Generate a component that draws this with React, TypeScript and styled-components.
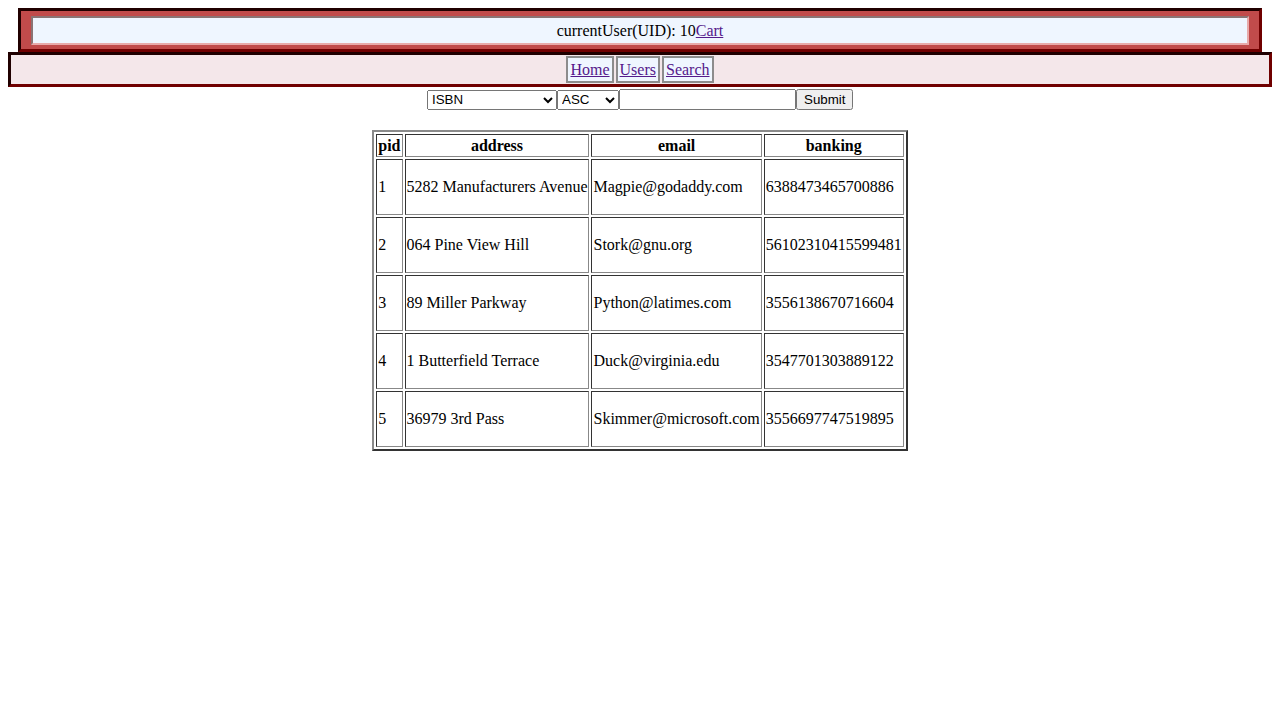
import React from "react";
import styled, { createGlobalStyle } from "styled-components";

const GlobalStyle = createGlobalStyle`
  body {
    margin: 8px;
    font-family: "Liberation Serif", "Times New Roman", serif;
    font-size: 16px;
    color: #000;
    background: #fff;
  }
  a { color: #551a8b; }
`;

const Header = styled.div`
  margin: 0 10px;
  border: 3px solid;
  border-color: #200000 #700000 #700000 #200000;
  background: #c14b4b;
  padding: 5px 10px 4px;
`;

const UserBox = styled.div`
  border: 2px solid;
  border-color: #8a7474 #e8aaaa #e8aaaa #8a7474;
  background: #eff6ff;
  text-align: center;
  padding: 4px 0 3px;
  line-height: 18px;
`;

const Nav = styled.div`
  border: 3px solid;
  border-color: #200000 #700000 #700000 #200000;
  background: #f4e7ea;
  padding: 1px 0;
  display: flex;
  justify-content: center;
  gap: 2px;
`;

const NavItem = styled.a`
  display: block;
  border: 2px solid #8c8c8c;
  background: #eff6ff;
  padding: 3px 2px 2px;
  line-height: 18px;
  color: #551a8b;
`;

const FormRow = styled.form`
  display: flex;
  justify-content: center;
  align-items: center;
  padding-top: 2px;
  margin: 0 0 20px;
`;

const Select = styled.select<{ $w: number }>`
  width: ${(p) => p.$w}px;
  height: 20px;
  font-family: "Liberation Sans", Arial, sans-serif;
  font-size: 13.333px;
  margin: 0;
`;

const TextInput = styled.input`
  width: 177px;
  height: 21px;
  box-sizing: border-box;
  font-family: "Liberation Sans", Arial, sans-serif;
  font-size: 13.333px;
  margin: 0;
`;

const SubmitButton = styled.button`
  width: 57px;
  height: 21px;
  font-family: "Liberation Sans", Arial, sans-serif;
  font-size: 13.333px;
  margin: 0;
  padding: 1px 6px;
`;

const Table = styled.table`
  margin: 0 auto;
  border: 2px solid;
  border-color: #8a8a8a #333 #333 #8a8a8a;
  border-spacing: 2px;
`;

const Th = styled.th`
  border: 1px solid;
  border-color: #333 #888 #888 #333;
  padding: 2px 1px 1px;
  line-height: 18px;
`;

const Td = styled.td`
  border: 1px solid;
  border-color: #333 #888 #888 #333;
  padding: 18px 1px;
  line-height: 18px;
`;

const rows = [
  ["1", "5282 Manufacturers Avenue", "Magpie@godaddy.com", "6388473465700886"],
  ["2", "064 Pine View Hill", "Stork@gnu.org", "56102310415599481"],
  ["3", "89 Miller Parkway", "Python@latimes.com", "3556138670716604"],
  ["4", "1 Butterfield Terrace", "Duck@virginia.edu", "3547701303889122"],
  ["5", "36979 3rd Pass", "Skimmer@microsoft.com", "3556697747519895"],
];

export default function App() {
  return (
    <>
      <GlobalStyle />
      <Header>
        <UserBox>
          currentUser(UID): 10<a href="#">Cart</a>
        </UserBox>
      </Header>
      <Nav>
        <NavItem href="#">Home</NavItem>
        <NavItem href="#">Users</NavItem>
        <NavItem href="#">Search</NavItem>
      </Nav>
      <FormRow onSubmit={(e) => e.preventDefault()}>
        <Select $w={130} defaultValue="ISBN">
          <option>ISBN</option>
          <option>Title</option>
          <option>Author</option>
        </Select>
        <Select $w={62} defaultValue="ASC">
          <option>ASC</option>
          <option>DESC</option>
        </Select>
        <TextInput type="text" />
        <SubmitButton type="submit">Submit</SubmitButton>
      </FormRow>
      <Table>
        <thead>
          <tr>
            <Th>pid</Th>
            <Th>address</Th>
            <Th>email</Th>
            <Th>banking</Th>
          </tr>
        </thead>
        <tbody>
          {rows.map((r) => (
            <tr key={r[0]}>
              {r.map((c, i) => (
                <Td key={i}>{c}</Td>
              ))}
            </tr>
          ))}
        </tbody>
      </Table>
    </>
  );
}
